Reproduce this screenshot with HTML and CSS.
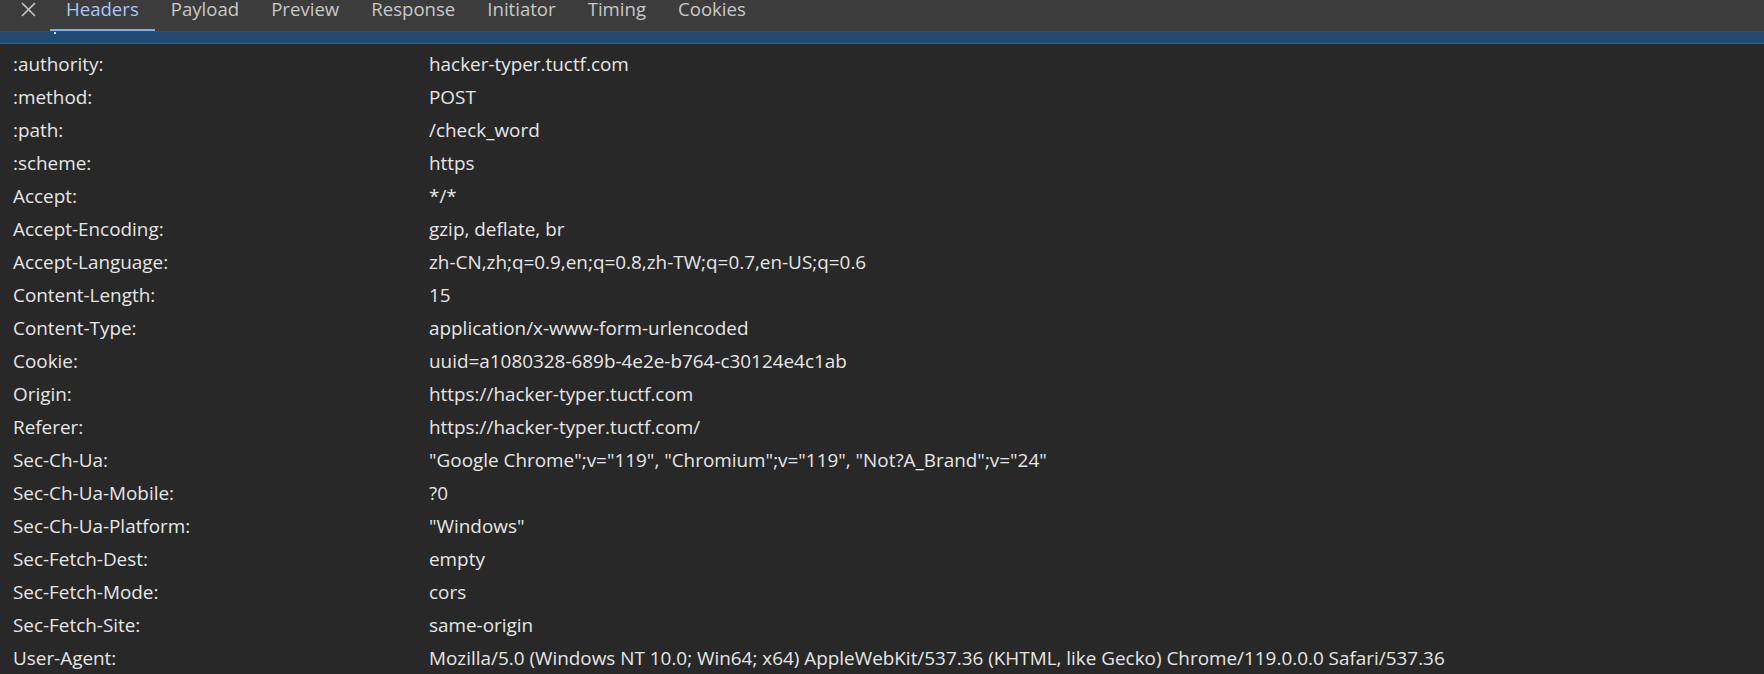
FILE: index.html
```html
<!DOCTYPE html>
<html lang="en">
<head>
<meta charset="utf-8">
<title>Headers</title>
<link rel="stylesheet" href="styles.css">
</head>
<body>
<div class="tabbar">
  <span class="close" aria-label="Close">
    <svg width="15" height="15" viewBox="0 0 15 15"><path d="M1 1 L14 14 M14 1 L1 14" stroke="#c7c7c7" stroke-width="1.6" fill="none"/></svg>
  </span>
  <span class="tab active">Headers</span>
  <span class="tab">Payload</span>
  <span class="tab">Preview</span>
  <span class="tab">Response</span>
  <span class="tab">Initiator</span>
  <span class="tab">Timing</span>
  <span class="tab">Cookies</span>
</div>
<div class="band"><span class="tick"></span></div>
<div class="rows">
  <div class="row"><span class="key">:authority:</span><span class="val">hacker-typer.tuctf.com</span></div>
  <div class="row"><span class="key">:method:</span><span class="val">POST</span></div>
  <div class="row"><span class="key">:path:</span><span class="val">/check_word</span></div>
  <div class="row"><span class="key">:scheme:</span><span class="val">https</span></div>
  <div class="row"><span class="key">Accept:</span><span class="val">*/*</span></div>
  <div class="row"><span class="key">Accept-Encoding:</span><span class="val">gzip, deflate, br</span></div>
  <div class="row"><span class="key">Accept-Language:</span><span class="val">zh-CN,zh;q=0.9,en;q=0.8,zh-TW;q=0.7,en-US;q=0.6</span></div>
  <div class="row"><span class="key">Content-Length:</span><span class="val">15</span></div>
  <div class="row"><span class="key">Content-Type:</span><span class="val">application/x-www-form-urlencoded</span></div>
  <div class="row"><span class="key">Cookie:</span><span class="val">uuid=a1080328-689b-4e2e-b764-c30124e4c1ab</span></div>
  <div class="row"><span class="key">Origin:</span><span class="val">https://hacker-typer.tuctf.com</span></div>
  <div class="row"><span class="key">Referer:</span><span class="val">https://hacker-typer.tuctf.com/</span></div>
  <div class="row"><span class="key">Sec-Ch-Ua:</span><span class="val">"Google Chrome";v="119", "Chromium";v="119", "Not?A_Brand";v="24"</span></div>
  <div class="row"><span class="key">Sec-Ch-Ua-Mobile:</span><span class="val">?0</span></div>
  <div class="row"><span class="key">Sec-Ch-Ua-Platform:</span><span class="val">"Windows"</span></div>
  <div class="row"><span class="key">Sec-Fetch-Dest:</span><span class="val">empty</span></div>
  <div class="row"><span class="key">Sec-Fetch-Mode:</span><span class="val">cors</span></div>
  <div class="row"><span class="key">Sec-Fetch-Site:</span><span class="val">same-origin</span></div>
  <div class="row"><span class="key">User-Agent:</span><span class="val">Mozilla/5.0 (Windows NT 10.0; Win64; x64) AppleWebKit/537.36 (KHTML, like Gecko) Chrome/119.0.0.0 Safari/537.36</span></div>
</div>
</body>
</html>
```
FILE: styles.css
```css
html, body {
  margin: 0;
  padding: 0;
  background: #282828;
  overflow: hidden;
}
body {
  font-family: "Open Sans", "Noto Sans", sans-serif;
  font-size: 18.9px;
  color: #e6e6e6;
  width: 1764px;
  height: 674px;
}
.tabbar {
  display: flex;
  align-items: flex-start;
  height: 31px;
  background: #3c3c3c;
  border-bottom: 1px solid #4a4a4a;
  white-space: nowrap;
}
.close {
  display: block;
  width: 15px;
  height: 15px;
  margin: 2px 14px 0 21px;
}
.close svg {
  display: block;
}
.tab {
  display: block;
  height: 29px;
  padding: 0 16px;
  font-size: 18.6px;
  line-height: 18px;
  color: #c8c8c8;
  border-bottom: 2px solid transparent;
}
.tab.active {
  color: #a8c7fa;
  border-bottom-color: #7cacf8;
}
.band {
  height: 11px;
  background: #1f4a73;
  border-bottom: 1px solid #5a5a5a;
  padding-left: 54px;
}
.tick {
  display: block;
  width: 2px;
  height: 2px;
  background: #d8d8d8;
}
.rows {
  padding-top: 4px;
}
.row {
  display: flex;
  height: 33px;
  line-height: 33px;
  padding-left: 13px;
  white-space: nowrap;
}
.key {
  width: 416px;
  flex: none;
}
.val {
  flex: none;
}
```
